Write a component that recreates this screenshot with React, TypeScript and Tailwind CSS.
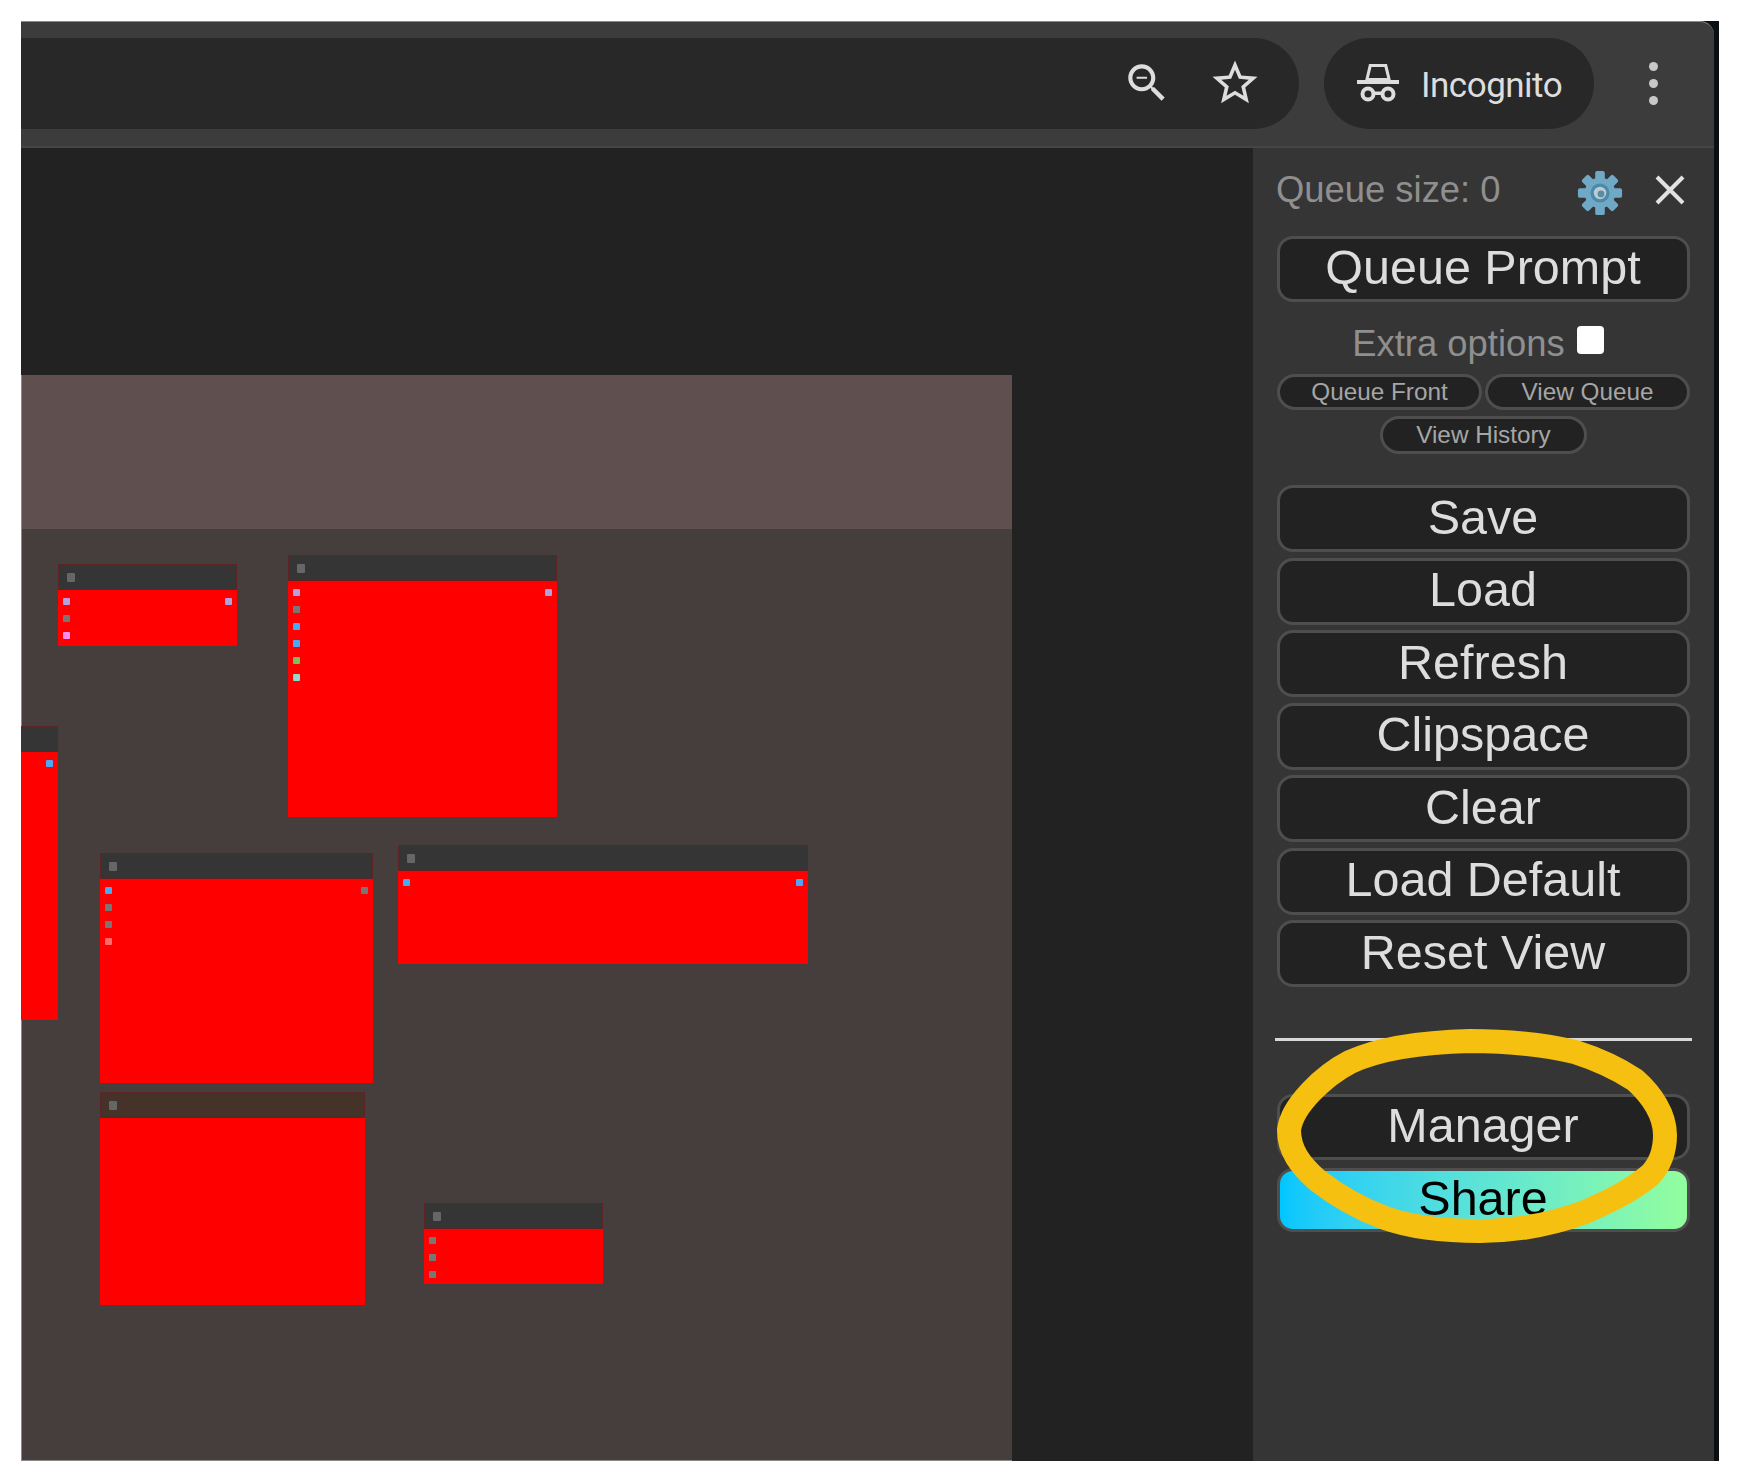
const slotColors = {
  purple: "bg-[#b3a0dc]",
  gray: "bg-[#777777]",
  pink: "bg-[#ff8cf0]",
  blue: "bg-[#4aa8f5]",
  green: "bg-[#78c060]",
  teal: "bg-[#98d8c8]",
  coral: "bg-[#ff6a6a]",
};
type SlotColor = keyof typeof slotColors;

type NodeData = {
  pos: string;
  left?: SlotColor[];
  right?: SlotColor[];
  title?: string;
  dot?: boolean;
};

const nodes: NodeData[] = [
  { pos: "left-[37px] top-[416px] w-[179px] h-[82px]", left: ["purple", "gray", "pink"], right: ["purple"] },
  { pos: "left-[267px] top-[407px] w-[269px] h-[262px]", left: ["purple", "gray", "blue", "blue", "green", "teal"], right: ["purple"] },
  { pos: "left-[0px] top-[578px] w-[37px] h-[294px]", right: ["blue"], dot: false },
  { pos: "left-[79px] top-[705px] w-[273px] h-[230px]", left: ["blue", "gray", "gray", "coral"], right: ["gray"] },
  { pos: "left-[377px] top-[697px] w-[410px] h-[119px]", left: ["blue"], right: ["blue"] },
  { pos: "left-[79px] top-[944px] w-[265px] h-[213px]", title: "bg-[#45332a]" },
  { pos: "left-[403px] top-[1055px] w-[179px] h-[81px]", left: ["gray", "gray", "gray"] },
];

function Slots({ colors }: { colors: SlotColor[] }) {
  return (
    <div className="flex flex-col gap-[10px]">
      {colors.map((c, i) => (
        <div key={i} className={`w-[7px] h-[7px] rounded-[1px] ${slotColors[c]}`} />
      ))}
    </div>
  );
}

function GraphNode({ n }: { n: NodeData }) {
  return (
    <div className={`absolute flex flex-col bg-[#ff0000] ${n.pos}`}>
      <div className={`h-[26px] shrink-0 flex items-center pl-[8px] border border-[#5c2424] ${n.title ?? "bg-[#353535]"}`}>
        {n.dot !== false && <div className="w-[8px] h-[9px] rounded-[1px] bg-[#666666]" />}
      </div>
      <div className="flex justify-between px-[5px] pt-[8px]">
        <Slots colors={n.left ?? []} />
        <Slots colors={n.right ?? []} />
      </div>
    </div>
  );
}

function BigButton({ label, h = "h-[67px]" }: { label: string; h?: string }) {
  return (
    <button className={`w-[413px] ${h} rounded-[16px] border-[3px] border-[#4e4e4e] bg-[#222222] text-[#dddddd] text-[48.5px] leading-none flex items-center justify-center pb-[3px] pr-[1px]`}>
      {label}
    </button>
  );
}

function SmallButton({ label, w }: { label: string; w: string }) {
  return (
    <button className={`${w} h-full rounded-full border-[3px] border-[#4e4e4e] bg-[#222222] text-[#a6a6a6] text-[24.3px] leading-none flex items-center justify-center`}>
      {label}
    </button>
  );
}

export default function App() {
  return (
    <div className="relative w-[1741px] h-[1483px] bg-white pt-[21px] pl-[21px] overflow-hidden font-['Liberation_Sans',Arial,sans-serif]">
      <div className="w-[1698px] h-[1440px] bg-[#0a0f12] pr-[5px]">
        <div className="h-full flex flex-col">
          <div className="h-[127px] shrink-0 bg-[#3c3c3c] rounded-tr-[14px] border-t border-[#8a8a8a] border-b-[2px] border-b-[#454545] flex items-center pb-[2px]">
            <div className="w-[1278px] h-[91px] bg-[#282828] rounded-r-[46px] flex items-center justify-end pr-[37px] gap-[36px]">
              <svg viewBox="0 0 24 24" className="w-[50px] h-[50px] fill-[#dddddd]">
                <path d="M15.5 14h-.79l-.28-.27C15.41 12.59 16 11.11 16 9.5 16 5.91 13.09 3 9.5 3S3 5.91 3 9.5 5.91 16 9.5 16c1.61 0 3.09-.59 4.23-1.57l.27.28v.79l5 4.99L20.49 19l-4.99-5zm-6 0C7.01 14 5 11.99 5 9.5S7.01 5 9.5 5 14 7.01 14 9.5 11.99 14 9.5 14zM7 9h5v1H7z" />
              </svg>
              <svg viewBox="0 0 24 24" className="w-[54px] h-[54px] fill-[#dddddd]">
                <path d="M22 9.24l-7.19-.62L12 2 9.19 8.63 2 9.24l5.46 4.73L5.82 21 12 17.27 18.18 21l-1.63-7.03L22 9.24zM12 15.4l-3.76 2.27 1-4.28-3.32-2.88 4.38-.38L12 6.1l1.71 4.04 4.38.38-3.32 2.88 1 4.28L12 15.4z" />
              </svg>
            </div>
            <div className="ml-[25px] w-[270px] h-[91px] bg-[#282828] rounded-full flex items-center pl-[33px]">
              <svg viewBox="0 0 42 40" className="w-[42px] h-[40px]">
                <path d="M12 1 H30 L34 18 H8 Z M14.5 4 L11.8 15 H30.2 L27.5 4 Z" fill="#dddddd" fillRule="evenodd" />
                <rect x="0" y="17" width="42" height="4" fill="#dddddd" />
                <circle cx="11" cy="31" r="5.5" fill="none" stroke="#dddddd" strokeWidth="4" />
                <circle cx="31" cy="31" r="5.5" fill="none" stroke="#dddddd" strokeWidth="4" />
                <rect x="16" y="28.5" width="10" height="3.5" fill="#dddddd" />
              </svg>
              <span className="ml-[22px] pt-[4px] font-['Roboto',sans-serif] text-[35px] tracking-[-0.5px] text-[#dddddd] leading-none">Incognito</span>
            </div>
            <div className="ml-[55px] flex flex-col gap-[8px]">
              <div className="w-[9px] h-[9px] rounded-full bg-[#c8c8c8]" />
              <div className="w-[9px] h-[9px] rounded-full bg-[#c8c8c8]" />
              <div className="w-[9px] h-[9px] rounded-full bg-[#c8c8c8]" />
            </div>
          </div>

          <div className="flex-1 flex min-h-0">
            <div className="relative flex-1 bg-[#222222]">
              <div className="absolute left-0 top-[227px] bottom-0 w-[991px] flex flex-col border-l border-b border-[#8a8a8a]">
                <div className="h-[154px] bg-[#5f4f4f]" />
                <div className="flex-1 bg-[#463e3c]" />
              </div>
              {nodes.map((n, i) => (
                <GraphNode key={i} n={n} />
              ))}
            </div>

            <aside className="w-[461px] shrink-0 bg-[#353535] pl-[24px] pr-[24px] pt-[20px] flex flex-col">
              <div className="h-[44px] flex items-center justify-between">
                <span className="text-[36.4px] leading-none text-[#8f8f8f] -ml-[1px]">Queue size: 0</span>
                <div className="flex items-center gap-[31px] pr-[4px]">
                  <svg viewBox="0 0 48 48" className="w-[46px] h-[46px] mt-[6px]">
                    <g fill="#6fa9c6">
                      <circle cx="24" cy="24" r="16" />
                      <rect x="19" y="1" width="10" height="46" rx="2" />
                      <rect x="19" y="1" width="10" height="46" rx="2" transform="rotate(45 24 24)" />
                      <rect x="19" y="1" width="10" height="46" rx="2" transform="rotate(90 24 24)" />
                      <rect x="19" y="1" width="10" height="46" rx="2" transform="rotate(135 24 24)" />
                    </g>
                    <circle cx="24" cy="24" r="10" fill="#4d8aa8" />
                    <circle cx="24" cy="24" r="6.5" fill="#b9cbd4" />
                    <circle cx="25" cy="25" r="3.5" fill="#5b8ca3" />
                  </svg>
                  <svg viewBox="0 0 32 32" className="w-[32px] h-[32px]">
                    <path d="M3 3 L29 29 M29 3 L3 29" stroke="#e2e2e2" strokeWidth="4" fill="none" />
                  </svg>
                </div>
              </div>

              <div className="mt-[24px]">
                <BigButton label="Queue Prompt" h="h-[66px]" />
              </div>

              <div className="mt-[20px] h-[44px] flex items-center justify-center gap-[12px] pr-[11px]">
                <span className="text-[36.4px] leading-none text-[#8f8f8f]">Extra options</span>
                <input type="checkbox" className="appearance-none w-[27px] h-[28px] mb-[8px] bg-white rounded-[4px]" />
              </div>

              <div className="mt-[8px] h-[36px] flex justify-between">
                <SmallButton label="Queue Front" w="w-[205px]" />
                <SmallButton label="View Queue" w="w-[205px]" />
              </div>
              <div className="mt-[6px] h-[38px] flex justify-center">
                <SmallButton label="View History" w="w-[207px]" />
              </div>

              <div className="mt-[31px] flex flex-col gap-[5.5px]">
                {["Save", "Load", "Refresh", "Clipspace", "Clear", "Load Default", "Reset View"].map((l) => (
                  <BigButton key={l} label={l} />
                ))}
              </div>

              <div className="mt-[51px] -mx-[2px] h-[3px] bg-[#d8d8d8]" />

              <div className="mt-[53px]">
                <BigButton label="Manager" h="h-[66px]" />
              </div>
              <button className="mt-[8px] w-[413px] h-[64px] rounded-[16px] border-[3px] border-[#4e4e4e] bg-gradient-to-r from-[#00c6ff] to-[#92fe9d] text-black text-[48.5px] leading-none flex items-center justify-center pb-[3px] pr-[1px]">
                Share
              </button>
            </aside>
          </div>
        </div>
      </div>

      <svg viewBox="0 0 1741 1483" className="absolute inset-0 w-[1741px] h-[1483px] pointer-events-none">
        <path
          d="M1289 1130 C1292 1105 1325 1075 1350 1062 C1385 1046 1430 1042 1470 1041 C1510 1041 1545 1045 1575 1052 C1600 1060 1620 1070 1635 1080 C1652 1095 1665 1115 1665 1135 C1665 1150 1660 1165 1650 1175 C1630 1192 1605 1203 1585 1212 C1550 1225 1515 1231 1480 1231 C1440 1231 1410 1227 1385 1218 C1355 1207 1335 1194 1317 1180 C1300 1165 1289 1150 1289 1130 Z"
          fill="none"
          stroke="#f5c010"
          strokeWidth="24"
        />
      </svg>
    </div>
  );
}
